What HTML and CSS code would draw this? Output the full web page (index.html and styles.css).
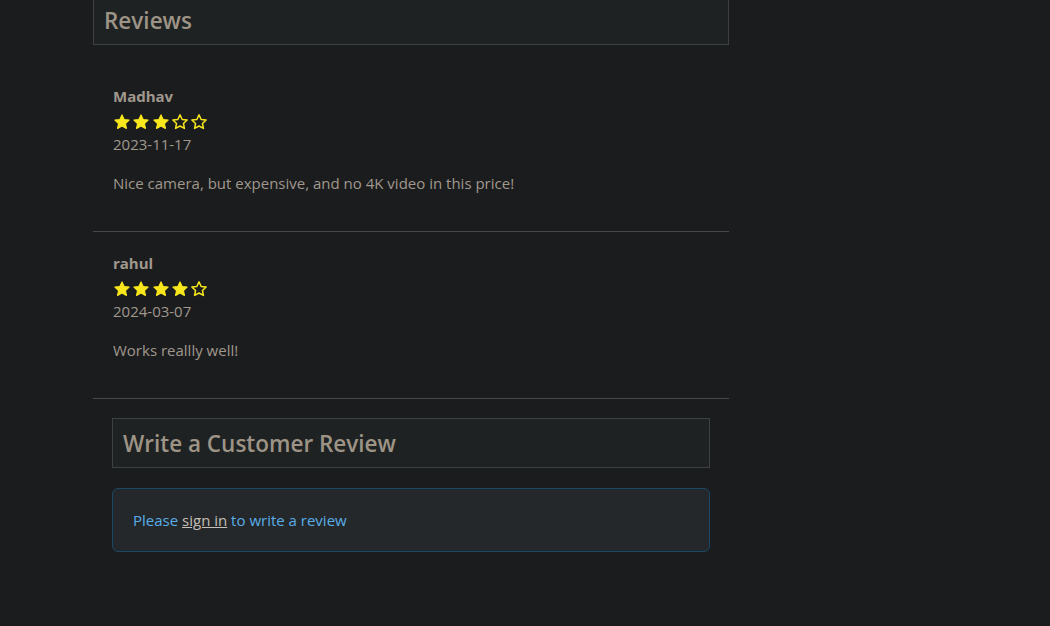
FILE: index.html
```html
<!DOCTYPE html>
<html lang="en">
<head>
    <meta charset="UTF-8">
    <title>Reviews</title>
    <link rel="stylesheet" href="styles.css">
</head>
<body>
    <svg width="0" height="0" class="defs">
        <defs>
            <polygon id="star" points="12,2.5 14.9,8.6 21.5,9.4 16.6,14 17.9,20.6 12,17.3 6.1,20.6 7.4,14 2.5,9.4 9.1,8.6"></polygon>
        </defs>
    </svg>

    <div class="reviews">
        <h2 class="section-title">Reviews</h2>

        <div class="review">
            <div class="review-name">Madhav</div>
            <div class="stars">
                <svg class="star full" viewBox="0 0 24 24"><use href="#star"></use></svg>
                <svg class="star full" viewBox="0 0 24 24"><use href="#star"></use></svg>
                <svg class="star full" viewBox="0 0 24 24"><use href="#star"></use></svg>
                <svg class="star empty" viewBox="0 0 24 24"><use href="#star"></use></svg>
                <svg class="star empty" viewBox="0 0 24 24"><use href="#star"></use></svg>
            </div>
            <div class="review-date">2023-11-17</div>
            <p class="review-text">Nice camera, but expensive, and no 4K video in this price!</p>
        </div>

        <div class="review">
            <div class="review-name">rahul</div>
            <div class="stars">
                <svg class="star full" viewBox="0 0 24 24"><use href="#star"></use></svg>
                <svg class="star full" viewBox="0 0 24 24"><use href="#star"></use></svg>
                <svg class="star full" viewBox="0 0 24 24"><use href="#star"></use></svg>
                <svg class="star full" viewBox="0 0 24 24"><use href="#star"></use></svg>
                <svg class="star empty" viewBox="0 0 24 24"><use href="#star"></use></svg>
            </div>
            <div class="review-date">2024-03-07</div>
            <p class="review-text">Works reallly well!</p>
        </div>

        <div class="write-review">
            <h2 class="section-title">Write a Customer Review</h2>
            <div class="alert">
                Please <a href="#">sign in</a> to write a review
            </div>
        </div>
    </div>
</body>
</html>
```

FILE: styles.css
```css
:root {
    --color-bg: #1b1c1e;
    --color-panel: #1f2223;
    --color-alert: #24282a;
    --color-border: #3e4143;
    --color-divider: #46494c;
    --color-text: #a0988d;
    --color-title: #9d9486;
    --color-star: #f8e71c;
    --color-info: #5aaee8;
    --color-info-border: #1b4868;
    --color-link: #c5bfb6;
}

* {
    margin: 0;
    padding: 0;
    box-sizing: border-box;
}

body {
    font-family: 'Open Sans', 'Noto Sans', sans-serif;
    font-size: 15px;
    line-height: 24px;
    background-color: var(--color-bg);
    color: var(--color-text);
    height: 626px;
    overflow: hidden;
}

.defs {
    position: absolute;
}

.reviews {
    width: 636px;
    margin: -5px 0 0 93px;
}

.section-title {
    background-color: var(--color-panel);
    border: 1px solid var(--color-border);
    color: var(--color-title);
    font-size: 22.5px;
    font-weight: 600;
    line-height: 28px;
    padding: 11px 10px 9px;
    height: 50px;
}

.reviews > .section-title {
    margin-bottom: 20px;
}

.review {
    padding: 19px 20px 21px;
    border-bottom: 1px solid var(--color-divider);
}

.review-name {
    font-weight: 700;
}

.stars {
    display: flex;
    gap: 1.3px;
    height: 24px;
    padding-top: 4px;
    align-items: center;
}

.star {
    width: 18px;
    height: 18px;
}

.star.full {
    fill: var(--color-star);
    stroke: var(--color-star);
    stroke-width: 1.5;
    stroke-linejoin: round;
}

.star.empty {
    fill: none;
    stroke: var(--color-star);
    stroke-width: 2;
    stroke-linejoin: round;
}

.review-text {
    margin: 15px 0 15px;
}

.write-review {
    padding: 19px 19px;
}

.alert {
    margin-top: 20px;
    background-color: var(--color-alert);
    border: 1px solid var(--color-info-border);
    border-radius: 6px;
    color: var(--color-info);
    padding: 19px 20px;
}

.alert a {
    color: var(--color-link);
}
```
